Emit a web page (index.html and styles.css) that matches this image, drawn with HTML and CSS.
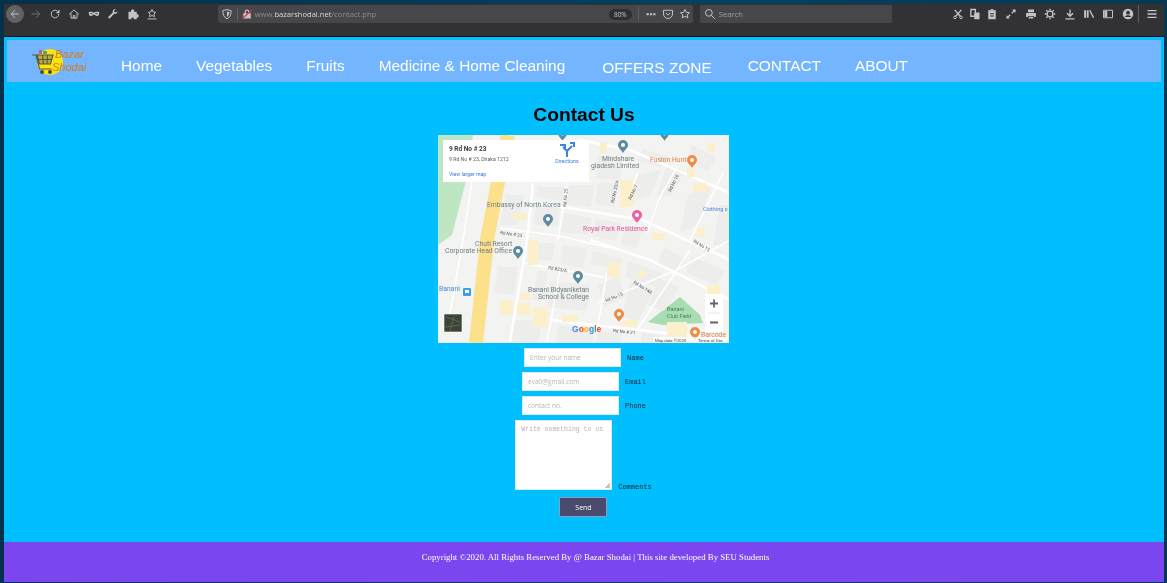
FILE: index.html
```html
<!DOCTYPE html>
<html lang="en">
<head>
  <meta charset="UTF-8">
  <title>Contact Us - Bazar Shodai</title>
  <link rel="stylesheet" href="styles.css">
</head>
<body>
<div class="window">

  <!-- browser toolbar -->
  <div class="toolbar">
    <span class="back">
      <svg class="ico" viewBox="0 0 16 16"><path class="ln" d="M13 8H3.5M8 3L3 8l5 5"/></svg>
    </span>
    <span class="btn dim">
      <svg class="ico" viewBox="0 0 16 16"><path class="ln" d="M2 8h10M8 3l5 5-5 5"/></svg>
    </span>
    <span class="btn">
      <svg class="ico" viewBox="0 0 16 16"><path class="ln" d="M13 8a5 5 0 1 1-2-4"/><path class="sh" d="M14 2v5H9z"/></svg>
    </span>
    <span class="btn">
      <svg class="ico" viewBox="0 0 16 16"><path class="ln" d="M1.5 8.5L8 2.5l6.500 6M4 7v6.500h8V7M7 13.500V10h2v3.500"/></svg>
    </span>
    <span class="btn">
      <svg class="ico" viewBox="0 0 16 16"><path class="sh" fill-rule="evenodd" d="M1 5.500c2-.8 4.500-.5 7 .5 2.500-1 5-1.300 7-.5 0 3-.5 5-3 5-2 0-3-2-4-2s-2 2-4 2c-2.500 0-3-2-3-5zM3 7.500c1 1 2.500 1 3.500.2-1-.6-2.500-.8-3.500-.2zM13 7.500c-1 1-2.500 1-3.500.2 1-.6 2.500-.8 3.500-.2z"/></svg>
    </span>
    <span class="btn">
      <svg class="ico" viewBox="0 0 16 16"><path class="sh" d="M14 4.500a3.500 3.500 0 0 1-4.600 3.300L4 13.500a1.400 1.400 0 0 1-2-2l5.700-5.400A3.500 3.500 0 0 1 11.500 1.500L9.500 3.500l.5 2 2 .5 2-2z"/></svg>
    </span>
    <span class="btn">
      <svg class="ico" viewBox="0 0 16 16"><path class="sh" d="M2 5h3.500C5 3 6 1.500 7.500 1.500S10 3 9.500 5H13v3.500c2-.5 2.500.5 2.500 2s-.5 2.500-2.500 2V15H9c.5-1.500 0-2.500-1.500-2.500S5.500 13.500 6 15H2z"/></svg>
    </span>
    <span class="btn">
      <svg class="ico" viewBox="0 0 16 16"><path class="ln" d="M8 2l1.700 3.300 3.300.5-2.400 2.300.6 3.400L8 10l-3.200 1.500.6-3.400L3 5.800l3.300-.5zM2 14.500h12"/></svg>
    </span>

    <div class="urlbar">
      <svg class="ico" viewBox="0 0 16 16"><path class="ln" d="M8 2l5.500 1.500C13.500 9 12 12.500 8 14.500 4 12.500 2.500 9 2.500 3.500z"/><path class="sh" d="M8 4.500l3 .8C11 8.500 10 10.500 8 12z"/></svg>
      <span class="divider"></span>
      <svg class="ico lock" viewBox="0 0 16 16"><path class="sh" d="M3 7h10v7H3zM5 7V5a3 3 0 0 1 6 0v2H9.500V5a1.500 1.500 0 0 0-3 0v2z"/><path class="slash" d="M2 14L14 3"/></svg>
      <span class="url">www.<b>bazarshodai.net</b>/contact.php</span>
      <span class="zoom-pill">80%</span>
      <span class="divider tall"></span>
      <span class="btn small"><svg class="ico" viewBox="0 0 16 16"><path class="sh" d="M2 7h3v2.500H2zM6.500 7h3v2.500h-3zM11 7h3v2.500h-3z"/></svg></span>
      <span class="btn small"><svg class="ico" viewBox="0 0 16 16"><path class="ln" d="M2 3h12v5a6 6 0 0 1-12 0zM5 6.500L8 9.500l3-3"/></svg></span>
      <span class="btn small"><svg class="ico" viewBox="0 0 16 16"><path class="ln" d="M8 2l1.800 3.800 4.200.5-3.100 2.800.9 4.100L8 11.100l-3.800 2.100.9-4.100L2 6.300l4.200-.5z"/></svg></span>
    </div>

    <div class="searchbar">
      <svg class="ico" viewBox="0 0 16 16"><circle class="ln" cx="6.500" cy="6.500" r="4.500"/><path class="ln" d="M10 10l4.500 4.500"/></svg>
      <span>Search</span>
    </div>

    <div class="tools">
      <span class="btn tight"><svg class="ico" viewBox="0 0 16 16"><circle class="ln" cx="4" cy="12.500" r="1.800"/><circle class="ln" cx="12" cy="12.500" r="1.800"/><path class="ln thick" d="M3.500 2.500l7.500 8.500M12.500 2.500L5 11"/></svg></span>
      <span class="btn tight"><svg class="ico" viewBox="0 0 16 16"><path class="ln thick" d="M2.500 2h6v9h-6z"/><path class="sh" d="M7 6h7v9H7z"/></svg></span>
      <span class="btn tight"><svg class="ico" viewBox="0 0 16 16"><path class="sh" d="M3 3h3V1.500h4V3h3v12H3z"/><path class="cut" d="M5.500 7h5v1.200h-5zM5.500 10h5v1.200h-5z"/></svg></span>
      <span class="btn after-edit"><svg class="ico" viewBox="0 0 16 16"><path class="ln thick" d="M9 7l4.500-4.500M7 9l-4.500 4.500"/><path class="sh" d="M9.500 2H14v4.500zM2 9.500V14h4.500z"/></svg></span>
      <span class="btn"><svg class="ico" viewBox="0 0 16 16"><path class="sh" d="M4 2h8v3.500H4zM1.500 6.500h13V12H12v-1.500H4V12H1.500zM5 11.500h6V14H5z"/></svg></span>
      <span class="btn"><svg class="ico" viewBox="0 0 16 16"><circle class="ln thick" cx="8" cy="8" r="3.800"/><path class="ln thick" d="M8 1v2.500M8 12.500V15M1 8h2.500M12.500 8H15M3 3l1.800 1.800M11.200 11.200L13 13M13 3l-1.800 1.800M4.800 11.200L3 13"/></svg></span>
      <span class="btn"><svg class="ico" viewBox="0 0 16 16"><path class="ln thick" d="M8 2v8.500M4 7l4 4 4-4M2 14.500h12"/></svg></span>
      <span class="btn"><svg class="ico" viewBox="0 0 16 16"><path class="sh" d="M1.500 3h2.500v10H1.500zM5 3h2.500v10H5z"/><path class="ln thick" d="M9 3l5 10"/></svg></span>
      <span class="btn"><svg class="ico" viewBox="0 0 16 16"><path class="ln" d="M2 3h12v10H2z"/><path class="sh" d="M3 4h4v8H3z"/></svg></span>
      <span class="btn"><svg class="ico" viewBox="0 0 16 16"><circle class="sh" cx="8" cy="8" r="7"/><circle class="cut" cx="8" cy="6.300" r="2.500"/><path class="cut" d="M3.500 12c1-2 2.500-2.500 4.500-2.500s3.500.5 4.500 2.500z"/></svg></span>
      <span class="divider tall wide"></span>
      <span class="btn"><svg class="ico" viewBox="0 0 16 16"><path class="ln thick" d="M2 3.500h12M2 8h12M2 12.500h12"/></svg></span>
    </div>
  </div>

  <!-- page -->
  <div class="page">
    <nav class="navbar">
      <svg class="logo" viewBox="0 0 60 28">
        <circle class="logo-sun" cx="18" cy="15" r="13"/>
        <path class="logo-goods" d="M7 3h3v4H7z"/>
        <path class="logo-goods2" d="M11 4h4v3h-4z"/>
        <path class="logo-fill" d="M5 8h16l-2.500 9H7.500z"/>
        <path class="logo-cart" d="M0 8h4l3.500 14h12M5 8h16l-2.500 9H7.500zM6 12.500h14M10.500 8l1 9M15.500 8l-.5 9"/>
        <circle class="logo-wheel" cx="10" cy="25" r="2"/>
        <circle class="logo-wheel" cx="18" cy="25" r="2"/>
        <text class="logo-text" x="23" y="11">Bazar</text>
        <text class="logo-text" x="20" y="24">Shodai</text>
      </svg>
      <a class="nav-link" href="#">Home</a>
      <a class="nav-link" href="#">Vegetables</a>
      <a class="nav-link" href="#">Fruits</a>
      <a class="nav-link" href="#">Medicine &amp; Home Cleaning</a>
      <a class="nav-link offers" href="#">OFFERS ZONE</a>
      <a class="nav-link" href="#">CONTACT</a>
      <a class="nav-link" href="#">ABOUT</a>
    </nav>

    <main class="content">
      <h2 class="heading">Contact Us</h2>

      <svg class="map" viewBox="0 0 291 208">
        <defs>
          <symbol id="pin" viewBox="0 0 10 13">
            <path d="M5 0a5 5 0 0 1 5 5c0 3-3 4.500-5 8-2-3.500-5-5-5-8a5 5 0 0 1 5-5z"/>
            <circle cx="5" cy="5" r="2" fill="#fff"/>
          </symbol>
        </defs>
        <rect class="m-land" width="291" height="208"/>
        <path class="m-park" d="M0 0h35L27 50 14 100 0 110z"/>
        <path class="m-field" d="M242 162l20 18 3 8-40 2-15-3z"/>

        <g class="m-block">
          <path d="M100 52h26l-2 14-26-4zM98 68l24 4-3 20-23-3zM132 50h24l-3 22-25-3zM160 48h20l-4 24-19-3z"/>
          <path d="M200 40l24-6-12 26-20 8zM228 32l18 4-12 24-16 2zM250 60l24-10-14 40-18 8zM282 70h9v40h-16z"/>
          <path d="M126 78l28 5-4 17-27-3zM158 84l25 4-5 18-24-5zM187 90l18 3-6 20-16-4zM93 108h24l-3 18-24-2z"/>
          <path d="M125 110l24 3-4 20-23-4zM155 116l30 8-4 10-28-4zM190 126l35 12-6 14-32-10zM226 112l22 12-8 16-20-10z"/>
          <path d="M254 122l34 14-10 14-30-12zM112 146l40 4-3 26-40-4zM60 132h20l-4 28-20-2zM100 136h10l-6 30-10-2z"/>
          <path d="M160 150l20-8 8 20-22 10zM192 146l24 10-16 30-16-4zM222 144l20 8-16 24-16-6zM68 60h18l-6 30H62z"/>
          <path d="M254 10l24 12-8 14-22-8zM205 14l26 8-8 10-24-6zM160 20l24 4-2 20h-24z"/>
          <path d="M120 190l36 4-2 14h-36zM160 196l24 3-2 9h-24zM204 198l20 2-1 8h-20zM250 204l12-2v6h-12zM74 185h30l-4 23H72z"/>
        </g>

        <g class="m-road thin">
          <path d="M34 47l-9 58-13 73M129 48l-9 57M200 38l-15 34M285 38l-33 67M122 135l-13 72M169 138l-10 57M252 115l-53 80"/>
          <path d="M159 168l80-33 53-30M85 128l80 14M239 32l-17 30-13 36M62 93l60 8 50 12"/>
        </g>
        <g class="m-road">
          <path d="M142 5l50 10 100 43M95 67l110 18 87 40M152 105l60 20 80 40M95 48l-6 57-17 102M112 185l180 20"/>
        </g>
        <path class="m-main" d="M70 0L60 47 49 105 38 208"/>

        <g class="m-yellow">
          <path d="M162 8h7v10h-7zM269 8h8v9h-8zM249 33h8v9h-8zM255 48h14v9h-14zM182 45h13v27h-13zM75 78h14v7H75zM214 98h13v7h-13zM259 93h8v9h-8z"/>
          <path d="M90 105h10v25H90zM169 128h13v14h-13zM200 135h7v7h-7zM62 165h13v15H62zM79 168h13v12H79zM95 172h15v20H95zM82 158h10v7H82zM124 180h16v7h-16zM185 185h14v7h-14zM229 187h20v15h-20zM269 150h13v12h-13z"/>
        </g>

        <use class="m-pin-teal" href="#pin" x="120" y="-6" width="9" height="12"/>
        <use class="m-pin-teal" href="#pin" x="222" y="-6" width="9" height="12"/>
        <use class="m-pin-teal" href="#pin" x="180" y="5" width="10" height="13"/>
        <use class="m-pin-teal" href="#pin" x="105" y="79" width="10" height="13"/>
        <use class="m-pin-teal" href="#pin" x="75" y="111" width="10" height="13"/>
        <use class="m-pin-teal" href="#pin" x="135" y="136" width="10" height="13"/>
        <use class="m-pin-orange" href="#pin" x="249" y="20" width="10" height="13"/>
        <use class="m-pin-orange" href="#pin" x="176" y="174" width="10" height="13"/>
        <use class="m-pin-orange" href="#pin" x="252" y="192" width="10" height="13"/>
        <use class="m-pin-pink" href="#pin" x="194" y="75" width="10" height="13"/>

        <g class="m-label">
          <text x="180" y="26" text-anchor="middle">Mindshare</text>
          <text x="153" y="33">gladesh Limited</text>
          <text x="49" y="72">Embassy of North Korea</text>
          <text x="37" y="111">Chuti Resort</text>
          <text x="7" y="118">Corporate Head Office</text>
          <text x="90" y="157">Banani Bidyaniketan</text>
          <text x="100" y="164">School &amp; College</text>
        </g>
        <text class="m-label orange" x="212" y="27">Fusion Hunt</text>
        <text class="m-label orange" x="263" y="202">Barcode</text>
        <text class="m-label pink" x="145" y="96">Royal Park Residence</text>
        <text class="m-label blue small" x="265" y="76">Clothing s</text>
        <text class="m-label blue" x="1" y="156">Banani</text>
        <rect class="m-bus" x="25" y="153" width="8" height="8" rx="1"/>
        <path class="m-bus-in" d="M27 155h4v3h-4z"/>
        <text class="m-label green" x="229" y="176">Banani</text>
        <text class="m-label green" x="229" y="183">Club Field</text>

        <g class="m-road-name">
          <text x="62" y="99" transform="rotate(8 62 99)">Rd No # 23</text>
          <text x="128" y="72" transform="rotate(-85 128 72)">Rd No 25</text>
          <text x="176" y="68" transform="rotate(-78 176 68)">Rd No 23/A</text>
          <text x="193" y="65" transform="rotate(-65 193 65)">Rd No 7</text>
          <text x="233" y="57" transform="rotate(-65 233 57)">Rd No 16</text>
          <text x="110" y="134" transform="rotate(10 110 134)">Rd #23/A</text>
          <text x="168" y="167" transform="rotate(-22 168 167)">Rd No 15</text>
          <text x="195" y="148" transform="rotate(32 195 148)">Rd No 14A</text>
          <text x="255" y="107" transform="rotate(32 255 107)">Rd No 15</text>
          <text x="175" y="197" transform="rotate(6 175 197)">Rd No # 21</text>
        </g>

        <text class="m-google" x="134" y="197"><tspan class="g-b">G</tspan><tspan class="g-r">o</tspan><tspan class="g-y">o</tspan><tspan class="g-b">g</tspan><tspan class="g-g">l</tspan><tspan class="g-r">e</tspan></text>

        <rect class="m-thumb" x="6" y="179" width="18" height="18"/>
        <path class="m-thumb-road" d="M8 182l14 5M12 196l4-14M7 192l15-2"/>

        <rect class="m-white" x="267" y="159" width="18" height="38"/>
        <path class="m-zoomline" d="M270 178h12"/>
        <path class="m-zoomsign" d="M272 168.500h8M276 164.500v8M272 187.500h8"/>

        <rect class="m-attrib" x="215" y="202" width="76" height="6"/>
        <text class="m-attrib-text" x="217" y="207">Map data ©2020</text>
        <text class="m-attrib-text" x="260" y="207">Terms of Use</text>

        <rect class="m-card" x="5" y="5" width="146" height="42"/>
        <text class="m-card-title" x="11" y="16">9 Rd No # 23</text>
        <text class="m-card-sub" x="11" y="26">9 Rd No # 23, Dhaka 1212</text>
        <text class="m-card-link" x="11" y="41">View larger map</text>
        <path class="m-dir" d="M129 22v-6l-4-4M129 16l5-5M122 10h5v5M132 8h4v4"/>
        <text class="m-card-link" x="129" y="28" text-anchor="middle">Directions</text>
      </svg>

      <form class="contact-form">
        <div class="form-row">
          <input class="field" type="text" placeholder="Enter your name">
          <label class="field-label">Name</label>
        </div>
        <div class="form-row">
          <input class="field" type="text" placeholder="eva0@gmail.com">
          <label class="field-label">Email</label>
        </div>
        <div class="form-row">
          <input class="field" type="text" placeholder="contact no.">
          <label class="field-label">Phone</label>
        </div>
        <div class="form-row bottom">
          <textarea class="field area" placeholder="Write something to us"></textarea>
          <label class="field-label">Comments</label>
        </div>
        <button class="send" type="button">Send</button>
      </form>
    </main>

    <footer class="footer">Copyright ©2020. All Rights Reserved By @ Bazar Shodai | This site developed By SEU Students</footer>
  </div>
</div>
</body>
</html>
```

FILE: styles.css
```css
* { box-sizing: border-box; }
html, body { height: 100%; }
body {
  margin: 0;
  padding: 4px 3px 1px 4px;
  overflow: hidden;
  background: linear-gradient(100deg, #04304a, #05405c 55%, #07384f);
  font-family: "Liberation Sans", sans-serif;
}
.window {
  height: 100%;
  display: flex;
  flex-direction: column;
  filter: blur(0.35px);
}

/* toolbar */
.toolbar {
  height: 33px;
  flex: none;
  display: flex;
  align-items: flex-start;
  padding: 1px 0 0 2px;
  background: #323234;
  border-bottom: 1px solid #0c0c0d;
  font-family: "Open Sans", sans-serif;
}
.ico { width: 12px; height: 12px; display: block; }
.ln { fill: none; stroke: #c4c4c6; stroke-width: 1.3; }
.ln.thick { stroke-width: 1.8; }
.sh { fill: #c4c4c6; }
.cut { fill: #323234; }
.slash { stroke: #e2304a; stroke-width: 1.6; }
.btn {
  width: 19.4px;
  height: 18px;
  flex: none;
  display: flex;
  align-items: center;
  justify-content: center;
}
.btn.dim { margin-left: 2px; opacity: .45; }
.btn.small { width: 17px; }
.btn.small:last-child { margin-right: -1px; }
.btn.tight { width: 17px; }
.btn.after-edit { margin-left: 1px; }
.back {
  width: 18px;
  height: 18px;
  flex: none;
  display: flex;
  align-items: center;
  justify-content: center;
  border-radius: 50%;
  background: #626264;
}
.urlbar {
  width: 475px;
  height: 18px;
  flex: none;
  margin-left: 56px;
  padding: 0 0 0 3px;
  display: flex;
  align-items: center;
  border-radius: 2px;
  background: #474749;
}
.divider { width: 1px; height: 13px; margin: 0 3px 0 4px; background: #5e5e60; }
.divider.tall { height: 14px; margin: 0 4px 0 6px; }
.divider.wide { height: 18px; margin: 0 3px 0 1px; }
.lock { margin-right: 2px; }
.url { flex: 1; font-size: 7.6px; color: #8d8d90; white-space: nowrap; }
.url b { font-weight: 400; color: #d8d8da; }
.zoom-pill {
  padding: 1px 5px;
  border-radius: 7px;
  background: #2f2f31;
  font-size: 6.5px;
  color: #c8c8ca;
}
.searchbar {
  width: 192px;
  height: 18px;
  flex: none;
  margin-left: 7px;
  padding-left: 4px;
  display: flex;
  align-items: center;
  gap: 3px;
  border-radius: 2px;
  background: #474749;
  font-size: 7.7px;
  color: #a0a0a3;
}
.tools { display: flex; margin-left: 58px; }

/* page */
.page {
  flex: 1;
  display: flex;
  flex-direction: column;
  background: #00bfff;
  min-height: 0;
}
.navbar {
  height: 42px;
  flex: none;
  margin: 3px 3px 0;
  display: flex;
  align-items: center;
  gap: 34px;
  padding-left: 25px;
  background: #74b5ff;
}
.logo { width: 60px; height: 28px; margin-right: -5px; overflow: visible; }
.logo-sun { fill: #fbe30f; }
.logo-cart { fill: none; stroke: #55554a; stroke-width: 1.1; }
.logo-fill { fill: #b9ab35; }
.logo-wheel { fill: #4a4a4a; }
.logo-goods { fill: #c9559a; }
.logo-goods2 { fill: #5aa658; }
.logo-text { font-size: 11px; font-style: italic; fill: #d87a16; }
.nav-link {
  padding-top: 10px;
  font-size: 15.4px;
  color: #fff;
  text-decoration: none;
  white-space: nowrap;
}
.offers { margin: 4px 2px 0 3px; }

.content {
  flex: 1;
  display: flex;
  flex-direction: column;
  align-items: center;
  min-height: 0;
}
.heading {
  margin: 21px 0 8px;
  font-size: 19.2px;
  line-height: 24px;
  color: #000;
}
.map { width: 291px; height: 208px; flex: none; margin-right: 1px; }

/* map drawing */
.m-land { fill: #f3f3f2; }
.m-park { fill: #bfe6c2; }
.m-field { fill: #a9dcb2; }
.m-block { fill: #ededeb; }
.m-yellow { fill: #fcf0cc; }
.m-road path { fill: none; stroke: #fff; stroke-width: 2.5; }
.m-road.thin path { stroke-width: 1.6; }
.m-main { fill: none; stroke: #fde08c; stroke-width: 14; }
.m-pin-teal { fill: #5d8b9e; }
.m-pin-orange { fill: #f08b44; }
.m-pin-pink { fill: #ec5fa4; }
.m-bus { fill: #3f9fe8; }
.m-bus-in { fill: #fff; }
.m-label { font-family: Roboto, sans-serif; font-size: 6.8px; fill: #6f7d82; }
.m-label.orange { fill: #d9824a; }
.m-label.pink { fill: #e2559c; }
.m-label.blue { fill: #4a86d8; }
.m-label.small { font-size: 5.5px; }
.m-label.green { fill: #3f8a5a; font-size: 5.5px; }
.m-road-name { font-family: Roboto, sans-serif; font-size: 4.5px; fill: #555; }
.m-google { font-family: "Liberation Sans", sans-serif; font-size: 8.5px; font-weight: 700; }
.g-b { fill: #4285f4; }
.g-r { fill: #ea4335; }
.g-y { fill: #fbbc05; }
.g-g { fill: #34a853; }
.m-thumb { fill: #3c4436; stroke: #fff; stroke-width: .6; }
.m-thumb-road { fill: none; stroke: #6e7562; stroke-width: .7; }
.m-white { fill: #fff; }
.m-zoomline { stroke: #e6e6e6; stroke-width: 1; }
.m-zoomsign { fill: none; stroke: #666; stroke-width: 1.8; }
.m-attrib { fill: #fff; opacity: .7; }
.m-attrib-text { font-family: Roboto, sans-serif; font-size: 4.2px; fill: #444; }
.m-card { fill: #fff; }
.m-card-title { font-family: Roboto, sans-serif; font-size: 6.5px; font-weight: 700; fill: #3c3c3c; }
.m-card-sub { font-family: Roboto, sans-serif; font-size: 5.2px; fill: #5b5b5b; }
.m-card-link { font-family: Roboto, sans-serif; font-size: 5.2px; fill: #3a78d8; }
.m-dir { fill: none; stroke: #3a84e0; stroke-width: 2; }

/* form */
.contact-form {
  display: flex;
  flex-direction: column;
  align-items: center;
  gap: 5px;
  margin-top: 5px;
}
.form-row { display: flex; align-items: center; gap: 6px; }
.form-row.bottom { align-items: flex-end; margin-right: 1px; }
.field {
  width: 97px;
  height: 19px;
  padding: 0 5px;
  border: 1px solid #dbe9f5;
  background: #fff;
  font-family: "Open Sans", sans-serif;
  font-size: 6.5px;
  outline: none;
}
.field::placeholder { color: #b5b5b5; }
.area {
  height: 70px;
  padding: 5px;
  display: block;
  font-family: "Liberation Mono", monospace;
}
.area::-webkit-resizer {
  background: linear-gradient(135deg, transparent 55%, #c4c4c4 55%) no-repeat right 1px bottom 1px / 6px 6px;
}
.field-label {
  font-family: "Liberation Mono", monospace;
  font-size: 7px;
  color: #123;
}
.bottom .field-label { position: relative; top: 1px; }
.send {
  width: 48px;
  height: 20px;
  margin: 2px 1px 0 0;
  padding: 0;
  border: 1px solid #8f9bc0;
  border-radius: 1px;
  background: #4a4a6c;
  color: #fff;
  font-family: "Open Sans", sans-serif;
  font-size: 7px;
}

.footer {
  height: 40px;
  flex: none;
  padding: 10px 0 0 23px;
  text-align: center;
  background: #7b45ef;
  color: #fff;
  font-family: "Liberation Serif", serif;
  font-size: 8.8px;
  line-height: 11px;
}
```
